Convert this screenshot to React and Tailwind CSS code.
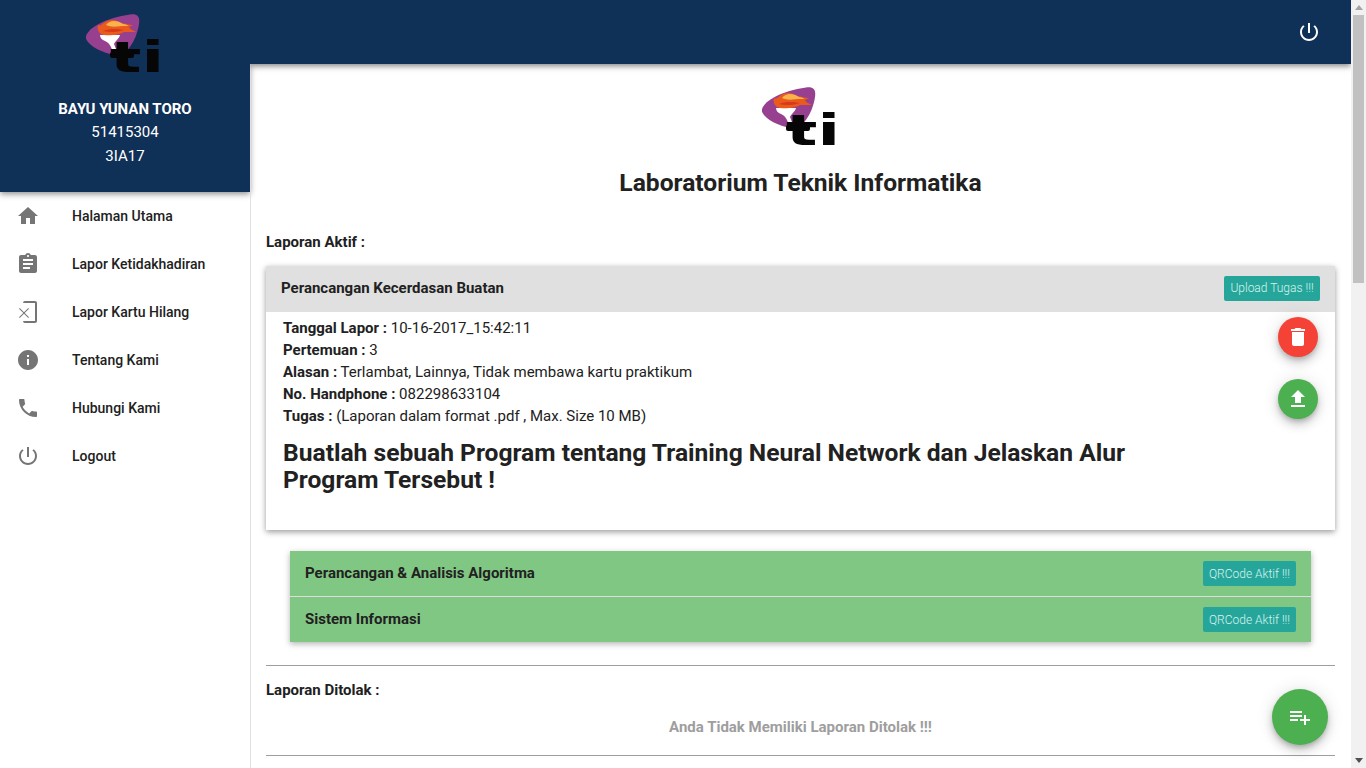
import React from "react";

const P = ({ d, className = "" }) => (
  <svg viewBox="0 0 24 24" className={className} fill="currentColor"><path d={d} /></svg>
);

const icons = {
  home: "M10 20v-6h4v6h5v-8h3L12 3 2 12h3v8z",
  assignment: "M19 3h-4.18C14.4 1.84 13.3 1 12 1c-1.3 0-2.4.84-2.82 2H5c-1.1 0-2 .9-2 2v14c0 1.1.9 2 2 2h14c1.1 0 2-.9 2-2V5c0-1.1-.9-2-2-2zm-7 0c.55 0 1 .45 1 1s-.45 1-1 1-1-.45-1-1 .45-1 1-1zm2 14H7v-2h7v2zm3-4H7v-2h10v2zm0-4H7V7h10v2z",
  card: "M9 1h10a2 2 0 0 1 2 2v18a2 2 0 0 1-2 2H9a2 2 0 0 1-2-2h12V3H7a2 2 0 0 1 2-2zM3.7 8L8 12.300 12.300 8l.7.7L8.700 13 13 17.300l-.7.7L8 13.700 3.700 18l-.7-.7L7.300 13 3 8.700z",
  info: "M12 2C6.480 2 2 6.480 2 12s4.480 10 10 10 10-4.480 10-10S17.520 2 12 2zm1 15h-2v-6h2v6zm0-8h-2V7h2v2z",
  phone: "M6.620 10.790c1.440 2.830 3.760 5.140 6.590 6.590l2.200-2.200c.27-.27.67-.36 1.020-.24 1.120.37 2.330.57 3.570.57.550 0 1 .45 1 1V20c0 .55-.45 1-1 1-9.390 0-17-7.610-17-17 0-.55.45-1 1-1h3.500c.55 0 1 .45 1 1 0 1.250.2 2.450.57 3.570.11.350.03.740-.25 1.020l-2.200 2.200z",
  power: "M13 3h-2v10h2V3zm4.830 2.170l-1.420 1.420C17.990 7.860 19 9.810 19 12c0 3.870-3.130 7-7 7s-7-3.130-7-7c0-2.190 1.010-4.140 2.580-5.420L6.170 5.170C4.230 6.820 3 9.260 3 12c0 4.970 4.030 9 9 9s9-4.030 9-9c0-2.740-1.230-5.180-3.170-6.830z",
  trash: "M6 19c0 1.100.9 2 2 2h8c1.100 0 2-.9 2-2V7H6v12zM19 4h-3.500l-1-1h-5l-1 1H5v2h14V4z",
  upload: "M9 16h6v-6h4l-7-7-7 7h4zm-4 2h14v2H5z",
  playlist: "M14 10H2v2h12v-2zm0-4H2v2h12V6zm4 8v-4h-2v4h-4v2h4v4h2v-4h4v-2h-4zM2 16h8v-2H2v2z",
};

const Logo = ({ className = "" }) => (
  <svg viewBox="0 0 78 72" className={`w-[78px] h-[72px] blur-[0.4px] ${className}`}>
    <path d="M0 22C3 13 20 4 44 0.500C52 -0.500 54 3 53 10C51 24 42 41 31 41C20 41 -2 31 0 22Z" fill="#96408f" />
    <path d="M14 21H34C33 25 29 27 28 30L32 40H27C26 34 24 29 19 27C16 26 14 24 14 21Z" fill="#fff" />
    <path d="M12 11C15 13 16 9 21 7C26 5 31 6 35 9C39 10 44 10 47 12C42 12 41 14 50 18H38C32 22 18 22 15 20C12 18 11 14 12 11Z" fill="#ea5a1c" />
    <path d="M20 11C25 5 32 7 37 10C42 11 44 12 40 12C32 12 26 14 20 11Z" fill="#f9b34c" />
    <path d="M17 17C24 14 32 15 38 16C32 18 24 19 17 17Z" fill="#d8391a" />
    <rect x="24" y="38" width="24" height="6" rx="2" fill="#060606" />
    <text x="24" y="58" fontFamily="'DejaVu Sans', sans-serif" fontWeight="700" fontSize="43" fill="#060606" textLength="54" lengthAdjust="spacingAndGlyphs">ti</text>
  </svg>
);

const nav = [
  ["home", "Halaman Utama"],
  ["assignment", "Lapor Ketidakhadiran"],
  ["card", "Lapor Kartu Hilang"],
  ["info", "Tentang Kami"],
  ["phone", "Hubungi Kami"],
  ["power", "Logout"],
];

const fabShadow = "shadow-[0_3px_5px_-1px_rgba(0,0,0,0.2),0_6px_10px_0_rgba(0,0,0,0.14),0_1px_18px_0_rgba(0,0,0,0.12)]";

const Fab = ({ color, icon }) => (
  <button className={`w-10 h-10 rounded-full flex items-center justify-center text-white ${fabShadow} ${color}`}>
    <P d={icon} className="w-6 h-6" />
  </button>
);

const Badge = ({ children }) => (
  <span className="h-[25px] w-[93px] justify-center flex items-center rounded-[2px] bg-[#26a69a] text-[12px] font-light text-[#d8f3f0]">{children}</span>
);

const Field = ({ label, value }) => (
  <p className="h-[22px] leading-[22px] text-[15px] text-[#212121]"><b className="font-bold">{label}</b> {value}</p>
);

export default function App() {
  return (
    <div className="flex h-screen overflow-hidden bg-white text-[#212121] [font-family:Roboto,sans-serif]">
      <aside className="w-[250px] shrink-0 h-full flex flex-col bg-white">
        <div className="h-[192px] shrink-0 bg-[#0f3057] shadow-[0_2px_6px_rgba(0,0,0,0.45)] flex flex-col items-center text-white relative">
          <Logo className="mt-[14px]" />
          <p className="mt-[14px] text-[15px] leading-[18px] font-bold">BAYU YUNAN TORO</p>
          <p className="mt-[2px] text-[15px] leading-[24px]">51415304</p>
          <p className="text-[15px] leading-[24px]">3IA17</p>
        </div>
        <nav className="flex-1">
          {nav.map(([ic, label]) => (
            <div key={label} className="h-[48px] flex items-center pl-4">
              <P d={icons[ic]} className="w-6 h-6 text-[#757575]" />
              <span className="ml-8 text-[14px] font-medium text-[#212121]">{label}</span>
            </div>
          ))}
        </nav>
      </aside>

      <div className="flex-1 h-full flex flex-col relative overflow-hidden">
        <header className="h-[64px] shrink-0 relative bg-[#0f3057] shadow-[0_2px_6px_rgba(0,0,0,0.5)] flex items-center justify-end pr-[30px] text-white">
          <P d={icons.power} className="w-6 h-6" />
        </header>
        <main className="flex-1 border-l border-[#e0e0e0] pl-[15px] pr-[16px]">
          <div className="flex flex-col items-center pt-[23px]">
            <Logo />
            <h1 className="mt-[10px] text-[24.6px] leading-[28px] font-bold">Laboratorium Teknik Informatika</h1>
          </div>
          <p className="mt-[35px] h-[20px] leading-[20px] text-[15px] font-bold">Laporan Aktif :</p>
          <section className="mt-[14px] shadow-[0_2px_6px_rgba(0,0,0,0.4)]">
            <div className="h-[46px] pb-[2px] bg-[#e0e0e0] flex items-center justify-between px-[15px]">
              <span className="text-[15px] font-bold">Perancangan Kecerdasan Buatan</span>
              <span className="h-[25px] w-[96px] justify-center flex items-center rounded-[2px] bg-[#26a69a] text-[12px] font-light text-[#d8f3f0]">Upload Tugas !!!</span>
            </div>
            <div className="h-[218px] px-[17px] pt-[5px] flex justify-between">
              <div className="w-[900px]">
                <Field label="Tanggal Lapor :" value="10-16-2017_15:42:11" />
                <Field label="Pertemuan :" value="3" />
                <Field label="Alasan :" value="Terlambat, Lainnya, Tidak membawa kartu praktikum" />
                <Field label="No. Handphone :" value="082298633104" />
                <Field label="Tugas :" value="(Laporan dalam format .pdf , Max. Size 10 MB)" />
                <h2 className="mt-[12px] text-[24.6px] leading-[27px] font-bold">Buatlah sebuah Program tentang Training Neural Network dan Jelaskan Alur Program Tersebut !</h2>
              </div>
              <div className="flex flex-col gap-[22px]">
                <Fab color="bg-[#f44336]" icon={icons.trash} />
                <Fab color="bg-[#4caf50]" icon={icons.upload} />
              </div>
            </div>
          </section>

          <section className="mt-[21px] mx-[24px] shadow-[0_2px_6px_rgba(0,0,0,0.3)]">
            <div className="h-[46px] bg-[#81c784] flex items-center justify-between px-[15px] border-b border-[#dddddd]">
              <span className="text-[15px] font-bold">Perancangan &amp; Analisis Algoritma</span>
              <Badge>QRCode Aktif !!!</Badge>
            </div>
            <div className="h-[45px] bg-[#81c784] flex items-center justify-between px-[15px]">
              <span className="text-[15px] font-bold">Sistem Informasi</span>
              <Badge>QRCode Aktif !!!</Badge>
            </div>
          </section>

          <hr className="mt-[23px] border-t border-[#9e9e9e]" />
          <p className="mt-[14px] h-[20px] leading-[20px] text-[15px] font-bold">Laporan Ditolak :</p>
          <p className="mt-[17px] h-[20px] leading-[20px] text-center text-[15px] font-bold text-[#9e9e9e]">Anda Tidak Memiliki Laporan Ditolak !!!</p>
          <hr className="mt-[18px] border-t border-[#9e9e9e]" />
        </main>
        <button className={`absolute right-[23px] top-[689px] w-14 h-14 rounded-full bg-[#4caf50] text-white flex items-center justify-center ${fabShadow}`}>
          <P d={icons.playlist} className="w-6 h-6" />
        </button>
      </div>

      <div className="w-[15px] shrink-0 h-full bg-[#f1f1f1] flex flex-col items-center">
        <div className="h-[15px] shrink-0 flex items-center justify-center">
          <svg viewBox="0 0 8 5" className="w-[8px] h-[5px]"><path d="M4 0L8 5H0z" fill="#a3a3a3" /></svg>
        </div>
        <div className="w-[11px] h-[268px] bg-[#c1c1c1]" />
        <div className="flex-1" />
        <div className="h-[15px] shrink-0 flex items-center justify-center">
          <svg viewBox="0 0 8 5" className="w-[8px] h-[5px]"><path d="M4 5L8 0H0z" fill="#505050" /></svg>
        </div>
      </div>
    </div>
  );
}
